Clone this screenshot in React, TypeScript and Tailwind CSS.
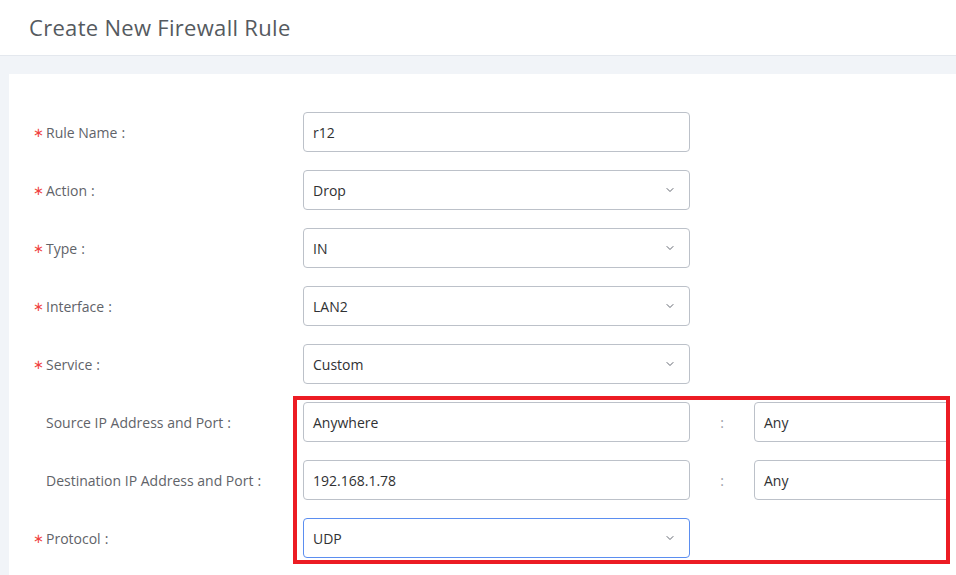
import { ChevronDown } from "lucide-react"

interface Row {
    label: string;
    required: boolean;
    value: string;
    kind: "input" | "select" | "pair";
    port?: string;
    focused?: boolean;
}

const rows: Row[] = [
    { label: "Rule Name", required: true, value: "r12", kind: "input" },
    { label: "Action", required: true, value: "Drop", kind: "select" },
    { label: "Type", required: true, value: "IN", kind: "select" },
    { label: "Interface", required: true, value: "LAN2", kind: "select" },
    { label: "Service", required: true, value: "Custom", kind: "select" },
    { label: "Source IP Address and Port", required: false, value: "Anywhere", kind: "pair", port: "Any" },
    { label: "Destination IP Address and Port", required: false, value: "192.168.1.78", kind: "pair", port: "Any" },
    { label: "Protocol", required: true, value: "UDP", kind: "select", focused: true },
]

function Field({ value, select, focused, className }: { value: string; select?: boolean; focused?: boolean; className: string }) {
    return (
        <div
            className={`${className} h-[40px] shrink-0 flex items-center justify-between pl-[9px] pr-[13px] rounded-[4px] border bg-white text-[14px] text-[#303133] ${focused ? "border-[#5b8ef0]" : "border-[#bcc1c9]"}`}
        >
            <span>{value}</span>
            {select && <ChevronDown size={12} strokeWidth={1.8} className="text-[#505560]" />}
        </div>
    )
}

export default function App() {
    return (
        <div className="relative w-[956px] h-[575px] overflow-hidden bg-[#f1f4f8] font-['Open_Sans',sans-serif]">
            <div className="h-[56px] bg-white border-b border-[#e4e8ee] flex items-center pl-[29px]">
                <h1 className="text-[22px] text-[#555a60] tracking-[0.3px]">Create New Firewall Rule</h1>
            </div>

            <div className="pt-[18px] pl-[9px]">
                <div className="bg-white h-[520px] pt-[38px] pl-[24px] flex flex-col gap-[18px]">
                    {rows.map((row) => (
                        <div key={row.label} className="flex items-center h-[40px]">
                            <div className="w-[270px] flex items-center text-[14px] text-[#5f6369]">
                                <span className="w-[13px] text-[#f0423f] text-[13px] pt-[2px]">{row.required ? "∗" : ""}</span>
                                <span>{row.label}</span>
                                <span className="ml-[4px]">:</span>
                            </div>
                            {row.kind === "pair" ? (
                                <div className="flex items-center">
                                    <Field value={row.value} className="w-[387px]" />
                                    <span className="w-[64px] text-center text-[14px] text-[#9ca0a6]">:</span>
                                    <Field value={row.port ?? ""} className="w-[196px]" />
                                </div>
                            ) : (
                                <Field value={row.value} select={row.kind === "select"} focused={row.focused} className="w-[387px]" />
                            )}
                        </div>
                    ))}
                </div>
            </div>

            {/* highlight box drawn over the screenshot */}
            <div className="absolute left-[293px] top-[396px] w-[657px] h-[168px] border-[4px] border-[#ec1c24]" />
        </div>
    )
}
